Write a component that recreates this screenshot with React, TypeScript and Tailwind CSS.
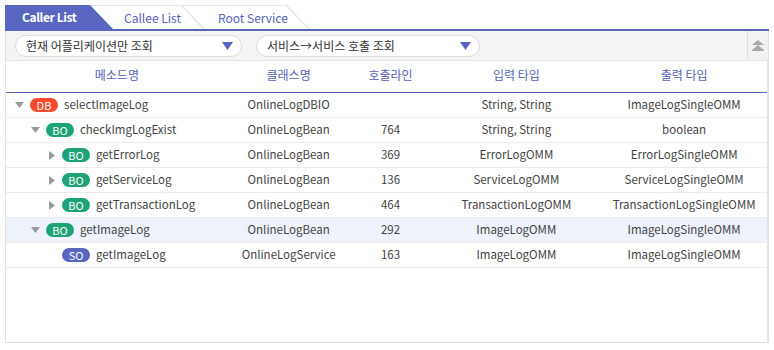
import React from 'react'

type Row = {
  level: number
  toggle: 'down' | 'right' | null
  kind: 'DB' | 'BO' | 'SO'
  name: string
  cls: string
  line: string
  input: string
  output: string
  selected?: boolean
}

const rows: Row[] = [
  { level: 0, toggle: 'down', kind: 'DB', name: 'selectImageLog', cls: 'OnlineLogDBIO', line: '', input: 'String, String', output: 'ImageLogSingleOMM' },
  { level: 1, toggle: 'down', kind: 'BO', name: 'checkImgLogExist', cls: 'OnlineLogBean', line: '764', input: 'String, String', output: 'boolean' },
  { level: 2, toggle: 'right', kind: 'BO', name: 'getErrorLog', cls: 'OnlineLogBean', line: '369', input: 'ErrorLogOMM', output: 'ErrorLogSingleOMM' },
  { level: 2, toggle: 'right', kind: 'BO', name: 'getServiceLog', cls: 'OnlineLogBean', line: '136', input: 'ServiceLogOMM', output: 'ServiceLogSingleOMM' },
  { level: 2, toggle: 'right', kind: 'BO', name: 'getTransactionLog', cls: 'OnlineLogBean', line: '464', input: 'TransactionLogOMM', output: 'TransactionLogSingleOMM' },
  { level: 1, toggle: 'down', kind: 'BO', name: 'getImageLog', cls: 'OnlineLogBean', line: '292', input: 'ImageLogOMM', output: 'ImageLogSingleOMM', selected: true },
  { level: 2, toggle: null, kind: 'SO', name: 'getImageLog', cls: 'OnlineLogService', line: '163', input: 'ImageLogOMM', output: 'ImageLogSingleOMM' },
]

const badgeColor = {
  DB: 'bg-[#f3492c]',
  BO: 'bg-[#1ea378]',
  SO: 'bg-[#5866c2]',
}

const indent = ['pl-[3px]', 'pl-[19px]', 'pl-[35px]']

function Toggle({ dir }: { dir: 'down' | 'right' | null }) {
  return (
    <span className="w-[21px] h-[25px] flex items-center justify-center shrink-0">
      {dir === 'down' && (
        <svg width="9" height="6" viewBox="0 0 9 6">
          <path d="M0 0H9L4.5 6Z" fill="#9a9a9a" />
        </svg>
      )}
      {dir === 'right' && (
        <svg width="6" height="9" viewBox="0 0 6 9">
          <path d="M0 0L6 4.5L0 9Z" fill="#9a9a9a" />
        </svg>
      )}
    </span>
  )
}

function Select({ label, width }: { label: string; width: string }) {
  return (
    <div className={`${width} h-[22px] rounded-full border border-[#dcdcdc] bg-white flex items-center justify-between pl-[10px] pr-[8px]`}>
      <span className="text-[12px] text-[#333]">{label}</span>
      <svg width="11" height="8" viewBox="0 0 11 8">
        <path d="M0 0H11L5.5 8Z" fill="#5866c2" />
      </svg>
    </div>
  )
}

export default function App() {
  return (
    <div className="w-[774px] h-[350px] bg-white pt-[5px] px-[5px] font-['Noto_Sans_CJK_KR','Noto_Sans',sans-serif]">
      {/* Tabs */}
      <div className="flex h-[24px] items-stretch">
        <div className="relative z-30 w-[108px] bg-[#5866c2] [clip-path:polygon(0_0,85px_0,100%_100%,0_100%)] pl-[17px] flex items-center">
          <span className="text-[12px] font-bold tracking-[-0.4px] text-white">Caller List</span>
        </div>
        <div className="relative z-20 -ml-[23px] w-[115px] bg-[#e6e6e6] [clip-path:polygon(0_0,92px_0,100%_100%,0_100%)] pt-px">
          <div className="h-full bg-white [clip-path:polygon(0_0,91px_0,113px_100%,0_100%)] pl-[34px] flex items-center">
            <span className="text-[12px] text-[#5563b8]">Callee List</span>
          </div>
        </div>
        <div className="relative z-10 -ml-[23px] w-[128px] bg-[#e6e6e6] [clip-path:polygon(0_0,105px_0,100%_100%,0_100%)] pt-px">
          <div className="h-full bg-white [clip-path:polygon(0_0,104px_0,126px_100%,0_100%)] pl-[36px] flex items-center">
            <span className="text-[12px] text-[#5563b8]">Root Service</span>
          </div>
        </div>
      </div>
      <div className="h-[2px] bg-[#5866c2]" />

      {/* Panel */}
      <div className="h-[312px] border-x border-b border-[#e2e2e2] flex flex-col">
        {/* Toolbar */}
        <div className="h-[30px] bg-[#f4f4f4] border-b border-[#e4e4e4] flex items-center">
          <div className="flex-1 flex items-center gap-[14px] pl-[9px]">
            <Select label="현재 어플리케이션만 조회" width="w-[227px]" />
            <Select label="서비스→서비스 호출 조회" width="w-[224px]" />
          </div>
          <div className="w-[21px] h-full border-l border-[#e0e0e0] bg-[#f2f2f2] flex items-center justify-center">
            <svg width="12" height="11" viewBox="0 0 12 11">
              <path d="M6 0L12 5H0Z" fill="#a9a9a9" />
              <path d="M6 5L12 10H0Z" fill="#a9a9a9" />
              <rect x="0" y="10" width="12" height="1" fill="#a9a9a9" />
            </svg>
          </div>
        </div>

        {/* Table */}
        <div className="w-[762px] border-r border-[#e6e6e6] flex-1">
          <div className="flex h-[32px] items-center pb-[3px] border-b border-[#5866c2] text-[12px] text-[#5563b8]">
            <div className="w-[222px] text-center">메소드명</div>
            <div className="w-[122px] text-center">클래스명</div>
            <div className="w-[82px] text-center">호출라인</div>
            <div className="w-[170px] text-center">입력 타입</div>
            <div className="w-[166px] text-center">출력 타입</div>
          </div>
          {rows.map((r, i) => (
            <div
              key={i}
              className={`flex h-[25px] items-center border-b border-[#ececec] text-[11.5px] text-[#444] ${r.selected ? 'bg-[#eef2fa]' : ''}`}
            >
              <div className={`w-[222px] flex items-center ${indent[r.level]}`}>
                <Toggle dir={r.toggle} />
                <span className={`w-[28px] h-[14px] rounded-full ${badgeColor[r.kind]} text-white text-[11px] leading-[14px] text-center shrink-0`}>
                  {r.kind}
                </span>
                <span className="ml-[6px]">{r.name}</span>
              </div>
              <div className="w-[122px] text-center">{r.cls}</div>
              <div className="w-[82px] text-center">{r.line}</div>
              <div className="w-[170px] text-center">{r.input}</div>
              <div className="w-[166px] text-center">{r.output}</div>
            </div>
          ))}
        </div>
      </div>
    </div>
  )
}
